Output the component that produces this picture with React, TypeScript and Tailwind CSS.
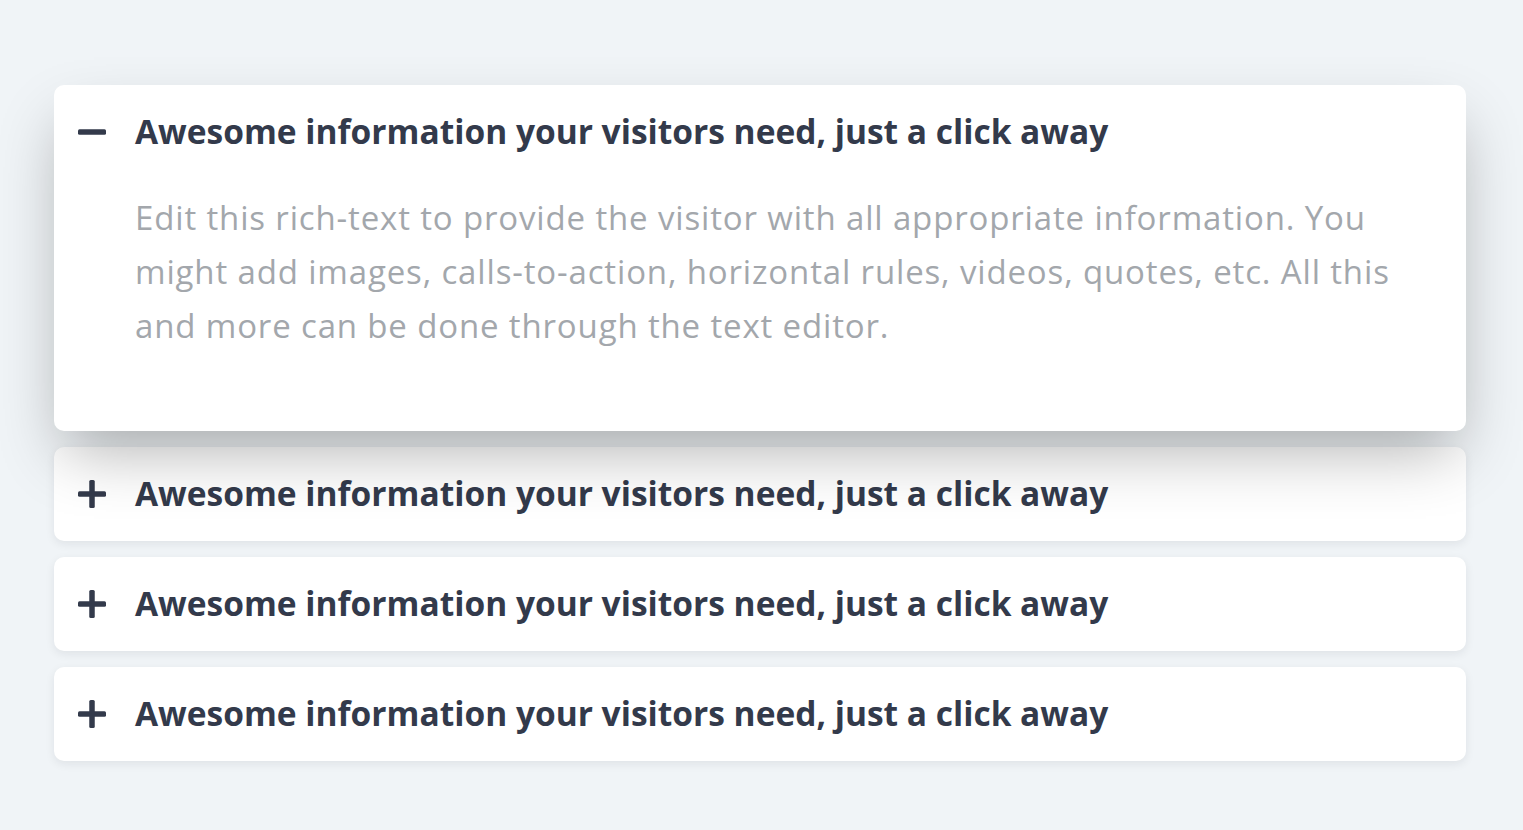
import { useState } from "react";

const title = "Awesome information your visitors need, just a click away";
const body =
  "Edit this rich-text to provide the visitor with all appropriate information. You might add images, calls-to-action, horizontal rules, videos, quotes, etc. All this and more can be done through the text editor.";

function Icon({ open }: { open: boolean }) {
  return (
    <svg width="28" height="28" viewBox="0 0 28 28" className="shrink-0 text-[#333a4b]">
      <rect x="0" y="11.25" width="28" height="5.5" rx="1.5" fill="currentColor" />
      {!open && <rect x="11.25" y="0" width="5.5" height="28" rx="1.5" fill="currentColor" />}
    </svg>
  );
}

export default function App() {
  const [open, setOpen] = useState(0);
  const items = [0, 1, 2, 3];

  return (
    <div className="min-h-screen bg-[#f0f4f7] pt-[85px] pb-[69px] font-['Open_Sans',sans-serif]">
      <div className="ml-[54px] flex w-[1412px] flex-col gap-4">
        {items.map((i) => {
          const isOpen = open === i;
          return (
            <div
              key={i}
              className={`rounded-[10px] bg-white ${
                isOpen
                  ? "relative z-10 shadow-[0_30px_60px_-10px_rgba(0,0,0,0.3)]"
                  : "shadow-[0_3px_10px_rgba(20,30,40,0.08)]"
              }`}
            >
              <button
                onClick={() => setOpen(isOpen ? -1 : i)}
                className="flex h-[94px] w-full items-center gap-[29px] pl-6 text-left"
              >
                <Icon open={isOpen} />
                <span className="-mt-0.5 text-[33.5px] font-bold text-[#333a4b]">{title}</span>
              </button>
              {isOpen && (
                <div className="pl-[81px] pr-6 pt-3 pb-[78px]">
                  <p className="text-[33px] leading-[54px] tracking-[0.85px] text-[#a3a7ac]">
                    {body}
                  </p>
                </div>
              )}
            </div>
          );
        })}
      </div>
    </div>
  );
}
